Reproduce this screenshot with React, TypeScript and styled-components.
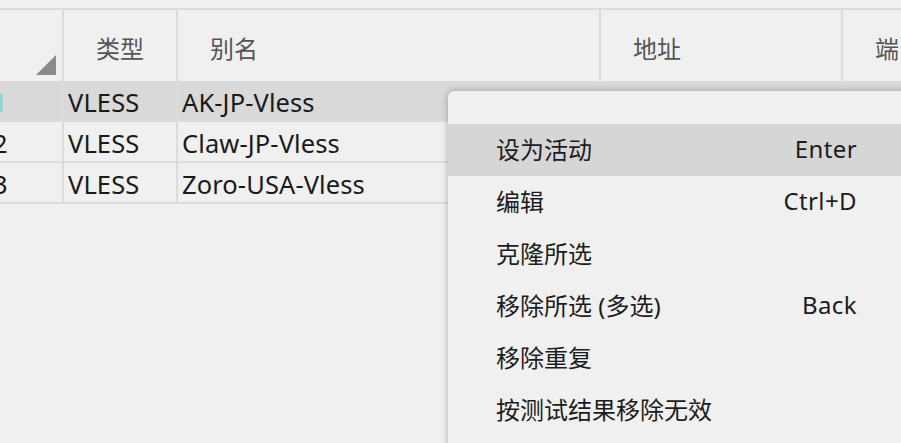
import React from "react";
import styled, { createGlobalStyle } from "styled-components";

const GlobalStyle = createGlobalStyle`
  html, body {
    margin: 0;
    padding: 0;
    background: #f0f0f0;
  }
  body {
    font-family: "Noto Sans", "Noto Sans CJK SC", sans-serif;
    -webkit-font-smoothing: antialiased;
  }
`;

const Page = styled.div`
  position: relative;
  width: 901px;
  height: 443px;
  overflow: hidden;
  background: #f0f0f0;
`;

const TopStrip = styled.div`
  height: 8px;
  border-bottom: 2px solid #dcdcdc;
`;

// the list is scrolled a bit to the right, so the first column is cut off
const Grid = styled.div`
  margin-left: -26px;
  display: grid;
  grid-template-columns: 90px 114px 423px 242px 200px;
`;

const HeadCell = styled.div<{ $corner?: boolean }>`
  height: 71px;
  box-sizing: border-box;
  border-right: 2px solid #dcdcdc;
  display: flex;
  align-items: ${(p) => (p.$corner ? "flex-end" : "center")};
  justify-content: ${(p) => (p.$corner ? "flex-end" : "flex-start")};
  padding: ${(p) => (p.$corner ? "0 6px 6px 0" : "3px 0 0 32px")};
  font-size: 24px;
  color: #555;
  white-space: nowrap;
`;

const Row = styled.div<{ $selected?: boolean }>`
  display: contents;
  & > div {
    background: ${(p) => (p.$selected ? "#d9d9d9" : "transparent")};
  }
`;

const Cell = styled.div<{ $num?: boolean; $active?: boolean }>`
  height: 41px;
  box-sizing: border-box;
  border-right: 2px solid #dcdcdc;
  border-bottom: 2px solid #dcdcdc;
  display: flex;
  align-items: center;
  padding-left: ${(p) => (p.$num ? "19px" : "4px")};
  padding-top: 2px;
  font-size: 25.5px;
  letter-spacing: 0.1px;
  color: ${(p) => (p.$active ? "#7fd8dc" : "#1a1a1a")};
  white-space: nowrap;
  overflow: hidden;
`;

const Menu = styled.div`
  position: absolute;
  left: 448px;
  top: 91px;
  width: 470px;
  padding: 33px 0 40px;
  background: #f0f0f0;
  border-radius: 6px;
  box-shadow: 0 0 7px rgba(0, 0, 0, 0.28);
`;

const MenuItem = styled.div<{ $hover?: boolean }>`
  height: 52px;
  box-sizing: border-box;
  display: flex;
  align-items: center;
  justify-content: space-between;
  padding: 0 61px 3px 48px;
  background: ${(p) => (p.$hover ? "#d6d6d6" : "transparent")};
  font-size: 24px;
  color: #1c1c1c;
  white-space: nowrap;
`;

const Shortcut = styled.span`
  color: #1c1c1c;
  letter-spacing: 0.4px;
`;

const SortArrow = () => (
  <svg width="20" height="20" viewBox="0 0 20 20">
    <polygon points="20,0 20,20 0,20" fill="#8a8a8a" />
  </svg>
);

const rows = [
  { n: "1", type: "VLESS", name: "AK-JP-Vless" },
  { n: "2", type: "VLESS", name: "Claw-JP-Vless" },
  { n: "3", type: "VLESS", name: "Zoro-USA-Vless" },
];

const menu = [
  { label: "设为活动", key: "Enter" },
  { label: "编辑", key: "Ctrl+D" },
  { label: "克隆所选", key: "" },
  { label: "移除所选 (多选)", key: "Back" },
  { label: "移除重复", key: "" },
  { label: "按测试结果移除无效", key: "" },
];

export default function App() {
  return (
    <Page>
      <GlobalStyle />
      <TopStrip />
      <Grid>
        <HeadCell $corner>
          <SortArrow />
        </HeadCell>
        <HeadCell>类型</HeadCell>
        <HeadCell>别名</HeadCell>
        <HeadCell>地址</HeadCell>
        <HeadCell>端口</HeadCell>
        {rows.map((r, i) => (
          <Row key={r.n} $selected={i === 0}>
            <Cell $num $active={i === 0}>{r.n}</Cell>
            <Cell>{r.type}</Cell>
            <Cell>{r.name}</Cell>
            <Cell />
            <Cell />
          </Row>
        ))}
      </Grid>
      <Menu>
        {menu.map((m, i) => (
          <MenuItem key={m.label} $hover={i === 0}>
            <span>{m.label}</span>
            <Shortcut>{m.key}</Shortcut>
          </MenuItem>
        ))}
      </Menu>
    </Page>
  );
}
